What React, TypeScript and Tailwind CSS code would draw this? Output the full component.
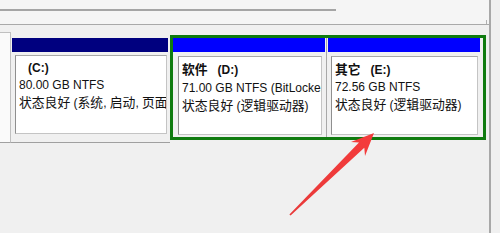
import React from "react";

const font = { fontFamily: '"Liberation Sans", "Noto Sans CJK SC", sans-serif' };

function Box({ children, className }: { children: React.ReactNode; className: string }) {
  return (
    <div
      className={
        "h-[79px] bg-white border border-[#c4c4c4] border-l-[#8f8f8f] border-t-[#a8a8a8] pl-[3px] pt-[4px] overflow-hidden whitespace-nowrap text-[12px] leading-[17px] text-[#111] " +
        className
      }
    >
      {children}
    </div>
  );
}

function Z({ children }: { children: React.ReactNode }) {
  return <span className="text-[12.8px]">{children}</span>;
}

export default function App() {
  return (
    <div className="w-[500px] h-[233px] bg-[#f0f0f0] relative overflow-hidden flex" style={font}>
      <div className="w-[489px] flex flex-col">
        <div className="h-[25px] bg-[#f5f5f5] border-b border-[#a9a9a9] relative">
          <div className="mt-[9px] h-[2px] w-[336px] bg-[#a5a5a5]" />
          <div className="absolute right-[2px] bottom-0 w-px h-[4px] bg-[#b0b0b0]" />
        </div>
        <div className="mt-[7px] h-[111px] flex">
          <div className="w-[11px] bg-[#fafafa] border-r border-b border-t border-[#c0c0c0] border-b-[#a0a0a0]" />
          <div className="w-[159px] flex flex-col pt-[6px] pl-[1px] border-b border-[#a0a0a0]">
            <div className="h-[14px] w-[156px] bg-[#00007f]" />
            <Box className="mt-[3px] ml-[3px] w-[152px]">
              <div className="font-bold">
                <span className="ml-[9px]">(C:)</span>
              </div>
              <div>80.00 GB NTFS</div>
              <div>
                <Z>状态良好</Z> (<Z>系统</Z>, <Z>启动</Z>, <Z>页面文件</Z>, <Z>故障转储</Z>, <Z>主分区</Z>)
              </div>
            </Box>
          </div>
          <div className="mt-[3px] w-[316px] h-[105px] border-[3px] border-[#0f7b0f] flex">
            <div className="w-[154px] flex flex-col border-r border-[#a8a8a8]">
              <div className="h-[14px] w-[152px] bg-[#0000ff]" />
              <Box className="mt-[4px] ml-[5px] w-[144px]">
                <div className="font-bold">
                  <Z>软件</Z>
                  <span className="ml-[10px]">(D:)</span>
                </div>
                <div>71.00 GB NTFS (BitLocker <Z>已加密</Z>)</div>
                <div>
                  <Z>状态良好</Z> (<Z>逻辑驱动器</Z>)
                </div>
              </Box>
            </div>
            <div className="w-[156px] flex flex-col pl-[1px] pr-[3px]">
              <div className="h-[14px] w-[152px] bg-[#0000ff]" />
              <Box className="mt-[4px] ml-[3px] w-[147px]">
                <div className="font-bold">
                  <Z>其它</Z>
                  <span className="ml-[10px]">(E:)</span>
                </div>
                <div>72.56 GB NTFS</div>
                <div>
                  <Z>状态良好</Z> (<Z>逻辑驱动器</Z>)
                </div>
              </Box>
            </div>
          </div>
        </div>
      </div>
      <div className="w-[2px] bg-[#a8a8a8]" />
      <svg className="absolute inset-0 pointer-events-none" width="500" height="233" viewBox="0 0 500 233">
        <defs>
          <linearGradient id="ag" x1="290" y1="215" x2="374" y2="133" gradientUnits="userSpaceOnUse">
            <stop offset="0" stopColor="#e83a3a" />
            <stop offset="1" stopColor="#f53b3b" />
          </linearGradient>
        </defs>
        <polygon
          points="374,133 351,142 359,142.5 289.4,214.6 290.6,215.6 364.3,147.8 365,156"
          fill="url(#ag)"
        />
      </svg>
    </div>
  );
}
